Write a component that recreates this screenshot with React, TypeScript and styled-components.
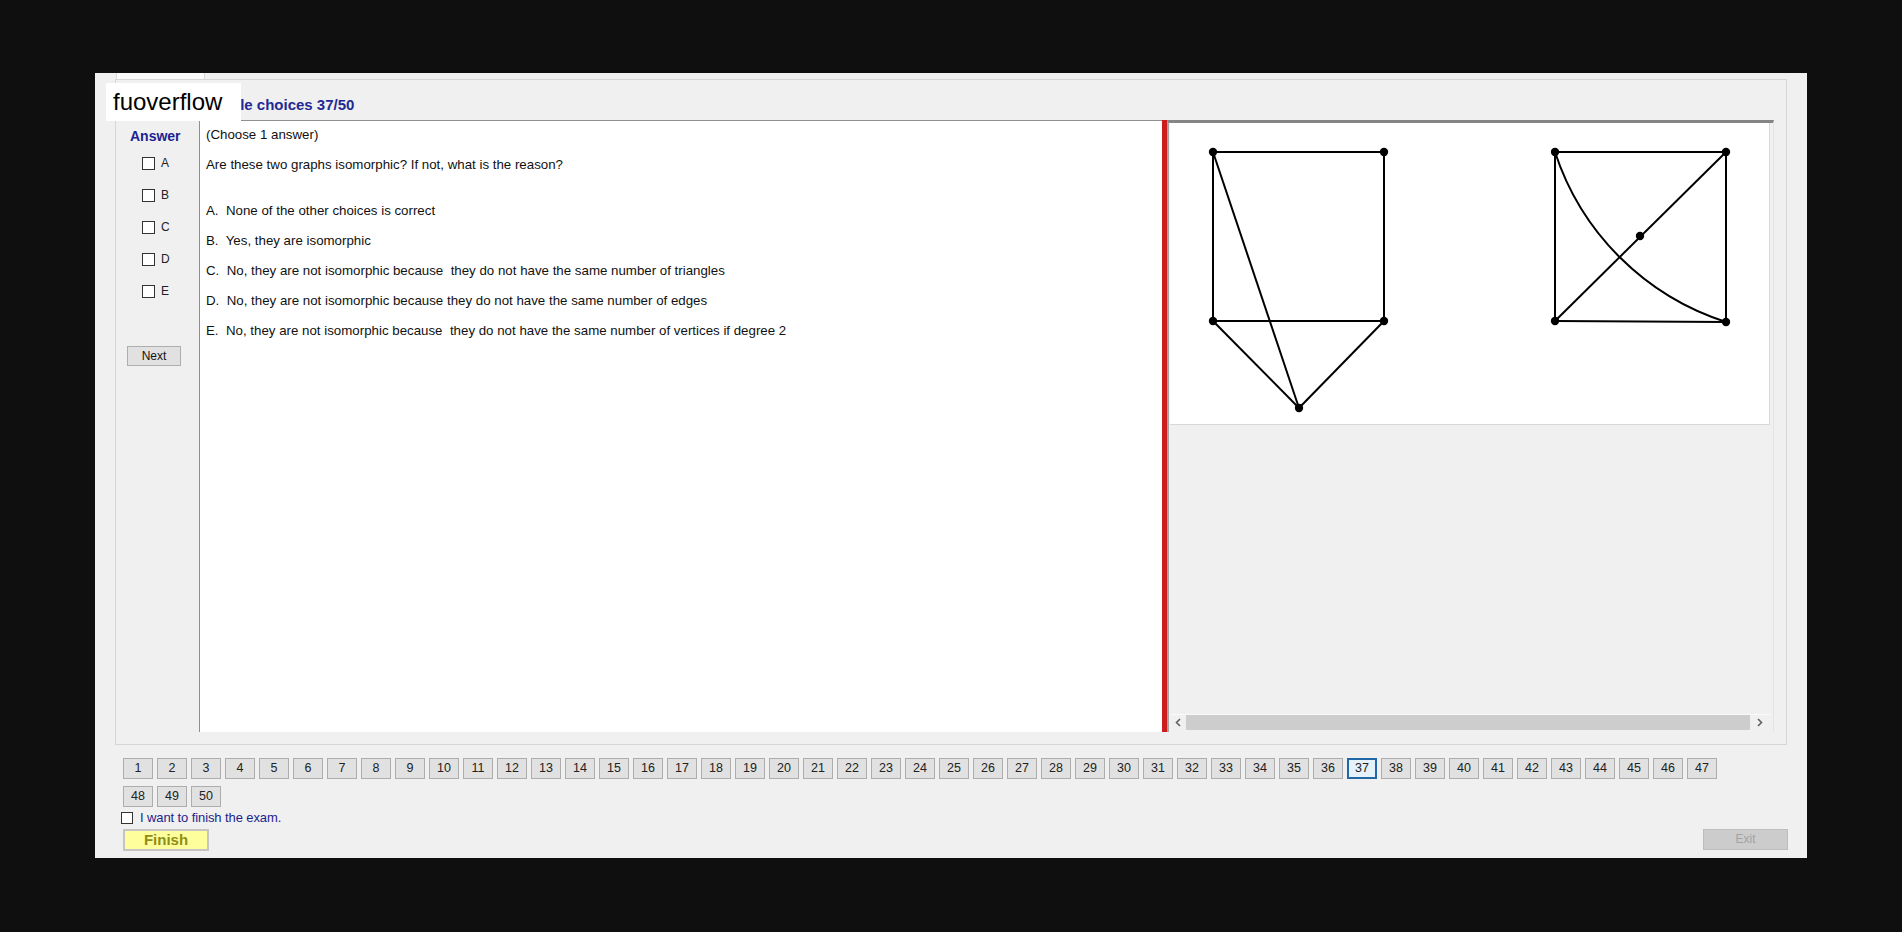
import React from "react";
import styled, { createGlobalStyle } from "styled-components";

const GlobalStyle = createGlobalStyle`
  html, body { margin: 0; padding: 0; background: #0f0f0f; }
  body { font-family: "Liberation Sans", Arial, sans-serif; }
  #root { width: 1902px; height: 932px; }
  * { box-sizing: border-box; }
`;

const Screen = styled.div`
  width: 1902px;
  height: 932px;
  background: #0f0f0f;
  padding: 73px 0 0 95px;
  overflow: hidden;
`;

const Window = styled.div`
  position: relative;
  width: 1712px;
  height: 785px;
  background: #f0f0f0;
  display: flex;
  flex-direction: column;
`;

const Watermark = styled.div`
  position: absolute;
  left: 11px;
  top: 10px;
  width: 135px;
  height: 38px;
  background: #ffffff;
  padding-left: 7px;
  font-size: 24px;
  line-height: 38px;
  color: #000;
  font-family: "Liberation Sans", Arial, sans-serif;
  z-index: 2;
`;

const TabStrip = styled.div`
  height: 6px;
  padding-left: 21px;
  display: flex;
`;

const Tab = styled.div`
  width: 89px;
  height: 6px;
  background: #fbfbfb;
  border-left: 1px solid #d9d9d9;
  border-right: 1px solid #d9d9d9;
`;

const TabPage = styled.div`
  margin-left: 20px;
  width: 1672px;
  height: 666px;
  border: 1px solid #d6d6d6;
  display: flex;
  flex-direction: column;
  padding: 16px 12px 12px 3px;
`;

const Title = styled.div`
  height: 18px;
  line-height: 18px;
  padding-left: 77px;
  font-size: 15px;
  font-weight: bold;
  color: #1f2a94;
`;

const Content = styled.div`
  margin-top: 6px;
  height: 612px;
  display: flex;
`;

const AnswerCol = styled.div`
  width: 80px;
  display: flex;
  flex-direction: column;
`;

const AnswerLabel = styled.div`
  margin-top: 8px;
  padding-left: 11px;
  height: 16px;
  line-height: 16px;
  font-size: 14px;
  font-weight: bold;
  color: #1a2390;
`;

const ChoiceList = styled.div`
  margin-top: 11px;
  display: flex;
  flex-direction: column;
  gap: 16px;
  padding-left: 23px;
`;

const ChoiceRow = styled.label`
  height: 16px;
  display: flex;
  align-items: center;
  gap: 6px;
  font-size: 12px;
  color: #222;
`;

const Box = styled.span<{ $size?: number }>`
  display: inline-block;
  width: ${(p) => p.$size ?? 13}px;
  height: ${(p) => p.$size ?? 13}px;
  background: #ffffff;
  border: 1px solid #333333;
  flex: none;
`;

const SmallButton = styled.div`
  margin: 47px 0 0 8px;
  width: 54px;
  height: 20px;
  background: #e1e1e1;
  border: 1px solid #adadad;
  font-size: 12px;
  line-height: 18px;
  text-align: center;
  color: #111;
`;

const QuestionPanel = styled.div`
  width: 963px;
  height: 612px;
  background: #ffffff;
  border-left: 1px solid #8f8f8f;
  border-top: 1px solid #8f8f8f;
  padding: 6px 0 0 6px;
  display: flex;
  flex-direction: column;
`;

const QLine = styled.div<{ $gap?: number }>`
  font-size: 13.3px;
  line-height: 15px;
  height: 15px;
  white-space: pre;
  color: #111;
  margin-bottom: ${(p) => p.$gap ?? 15}px;
`;

const Splitter = styled.div`
  width: 5px;
  height: 612px;
  background: #cc1d1d;
`;

const ImagePanel = styled.div`
  width: 607px;
  height: 612px;
  border-top: 3px solid #858585;
  border-left: 2px solid #a3a3a3;
  border-right: 1px solid #e4e4e4;
  display: flex;
  flex-direction: column;
`;

const Picture = styled.div`
  margin-left: 1px;
  width: 600px;
  height: 302px;
  background: #ffffff;
  border-right: 1px solid #d8d8d8;
  border-bottom: 1px solid #d8d8d8;
`;

const HScroll = styled.div`
  margin: auto 0 2px 1px;
  width: 600px;
  height: 16px;
  display: flex;
  align-items: center;
  background: #f0f0f0;
  border-top: 1px solid #fafafa;
`;

const ScrollArrow = styled.div<{ $w: number }>`
  width: ${(p) => p.$w}px;
  height: 15px;
  display: flex;
  align-items: center;
  justify-content: center;
`;

const ScrollTrack = styled.div`
  flex: 1;
  height: 15px;
  background: #cdcdcd;
`;

const Bottom = styled.div`
  display: flex;
  flex-direction: column;
`;

const NumberGrid = styled.div`
  margin: 13px 0 0 28px;
  width: 1600px;
  display: flex;
  flex-wrap: wrap;
  gap: 7px 4px;
`;

const NumButton = styled.div<{ $active?: boolean }>`
  width: 30px;
  height: 21px;
  background: ${(p) => (p.$active ? "#e5f1fb" : "#e1e1e1")};
  border: ${(p) => (p.$active ? "2px solid #2368a6" : "1px solid #adadad")};
  font-size: 12.5px;
  line-height: ${(p) => (p.$active ? 17 : 19)}px;
  text-align: center;
  color: #222;
`;

const FinishCheck = styled.label`
  margin: 4px 0 0 26px;
  height: 13px;
  display: flex;
  align-items: center;
  gap: 7px;
  font-size: 13px;
  color: #1c1f8c;
  letter-spacing: -0.1px;
`;

const ActionRow = styled.div`
  margin-top: 5px;
  padding: 0 19px 0 28px;
  display: flex;
  justify-content: space-between;
  align-items: flex-start;
`;

const FinishButton = styled.div`
  width: 86px;
  height: 22px;
  background: #fefe9c;
  border: 2px solid #c4c4c4;
  font-size: 15px;
  font-weight: bold;
  line-height: 18px;
  text-align: center;
  color: #8e8e14;
`;

const ExitButton = styled.div`
  width: 85px;
  height: 21px;
  background: #cccccc;
  border: 1px solid #bdbdbd;
  font-size: 12px;
  line-height: 19px;
  text-align: center;
  color: #a2a2a2;
`;

const Dot = ({ x, y }: { x: number; y: number }) => <circle cx={x} cy={y} r={4.2} fill="#000" />;

const Graphs = () => {
  const L = { tl: [43, 29], tr: [214, 29], bl: [43, 198], br: [214, 198], b: [129, 285] };
  const R = { tl: [385, 29], tr: [556, 29], bl: [385, 198], br: [556, 199], c: [470, 113] };
  const line = (a: number[], b: number[], k: string) => (
    <line key={k} x1={a[0]} y1={a[1]} x2={b[0]} y2={b[1]} stroke="#000" strokeWidth={2} />
  );
  return (
    <svg width="600" height="302" viewBox="0 0 600 302">
      {line(L.tl, L.tr, "1")}
      {line(L.tl, L.bl, "2")}
      {line(L.tr, L.br, "3")}
      {line(L.bl, L.br, "4")}
      {line(L.bl, L.b, "5")}
      {line(L.br, L.b, "6")}
      {line(L.tl, L.b, "7")}
      {[L.tl, L.tr, L.bl, L.br, L.b].map((p, i) => (
        <Dot key={"l" + i} x={p[0]} y={p[1]} />
      ))}
      {line(R.tl, R.tr, "r1")}
      {line(R.tl, R.bl, "r2")}
      {line(R.tr, R.br, "r3")}
      {line(R.bl, R.br, "r4")}
      {line(R.bl, R.tr, "r5")}
      <path
        d={`M ${R.tl[0]} ${R.tl[1]} A 265 265 0 0 0 ${R.br[0]} ${R.br[1]}`}
        fill="none"
        stroke="#000"
        strokeWidth={2}
      />
      {[R.tl, R.tr, R.bl, R.br, R.c].map((p, i) => (
        <Dot key={"r" + i} x={p[0]} y={p[1]} />
      ))}
    </svg>
  );
};

const Chevron = ({ dir }: { dir: "left" | "right" }) => (
  <svg width="6" height="9" viewBox="0 0 6 9">
    <path
      d={dir === "left" ? "M5 1 L1.5 4.5 L5 8" : "M1 1 L4.5 4.5 L1 8"}
      fill="none"
      stroke="#606060"
      strokeWidth={1.6}
    />
  </svg>
);

const questionLines = [
  "A.  None of the other choices is correct",
  "B.  Yes, they are isomorphic",
  "C.  No, they are not isomorphic because  they do not have the same number of triangles",
  "D.  No, they are not isomorphic because they do not have the same number of edges",
  "E.  No, they are not isomorphic because  they do not have the same number of vertices if degree 2",
];

export default function App() {
  const numbers = Array.from({ length: 50 }, (_, i) => i + 1);
  return (
    <>
      <GlobalStyle />
      <Screen>
        <Window>
          <TabStrip>
            <Tab />
          </TabStrip>
          <TabPage>
            <Title>Multiple choices 37/50</Title>
            <Content>
              <AnswerCol>
                <AnswerLabel>Answer</AnswerLabel>
                <ChoiceList>
                  {["A", "B", "C", "D", "E"].map((c) => (
                    <ChoiceRow key={c}>
                      <Box />
                      {c}
                    </ChoiceRow>
                  ))}
                </ChoiceList>
                <SmallButton>Next</SmallButton>
              </AnswerCol>
              <QuestionPanel>
                <QLine>(Choose 1 answer)</QLine>
                <QLine $gap={31}>Are these two graphs isomorphic? If not, what is the reason?</QLine>
                {questionLines.map((l) => (
                  <QLine key={l}>{l}</QLine>
                ))}
              </QuestionPanel>
              <Splitter />
              <ImagePanel>
                <Picture>
                  <Graphs />
                </Picture>
                <HScroll>
                  <ScrollArrow $w={16}>
                    <Chevron dir="left" />
                  </ScrollArrow>
                  <ScrollTrack />
                  <ScrollArrow $w={20}>
                    <Chevron dir="right" />
                  </ScrollArrow>
                </HScroll>
              </ImagePanel>
            </Content>
          </TabPage>
          <Bottom>
            <NumberGrid>
              {numbers.map((n) => (
                <NumButton key={n} $active={n === 37}>
                  {n}
                </NumButton>
              ))}
            </NumberGrid>
            <FinishCheck>
              <Box $size={12} />I want to finish the exam.
            </FinishCheck>
            <ActionRow>
              <FinishButton>Finish</FinishButton>
              <ExitButton>Exit</ExitButton>
            </ActionRow>
          </Bottom>
          <Watermark>fuoverflow</Watermark>
        </Window>
      </Screen>
    </>
  );
}
